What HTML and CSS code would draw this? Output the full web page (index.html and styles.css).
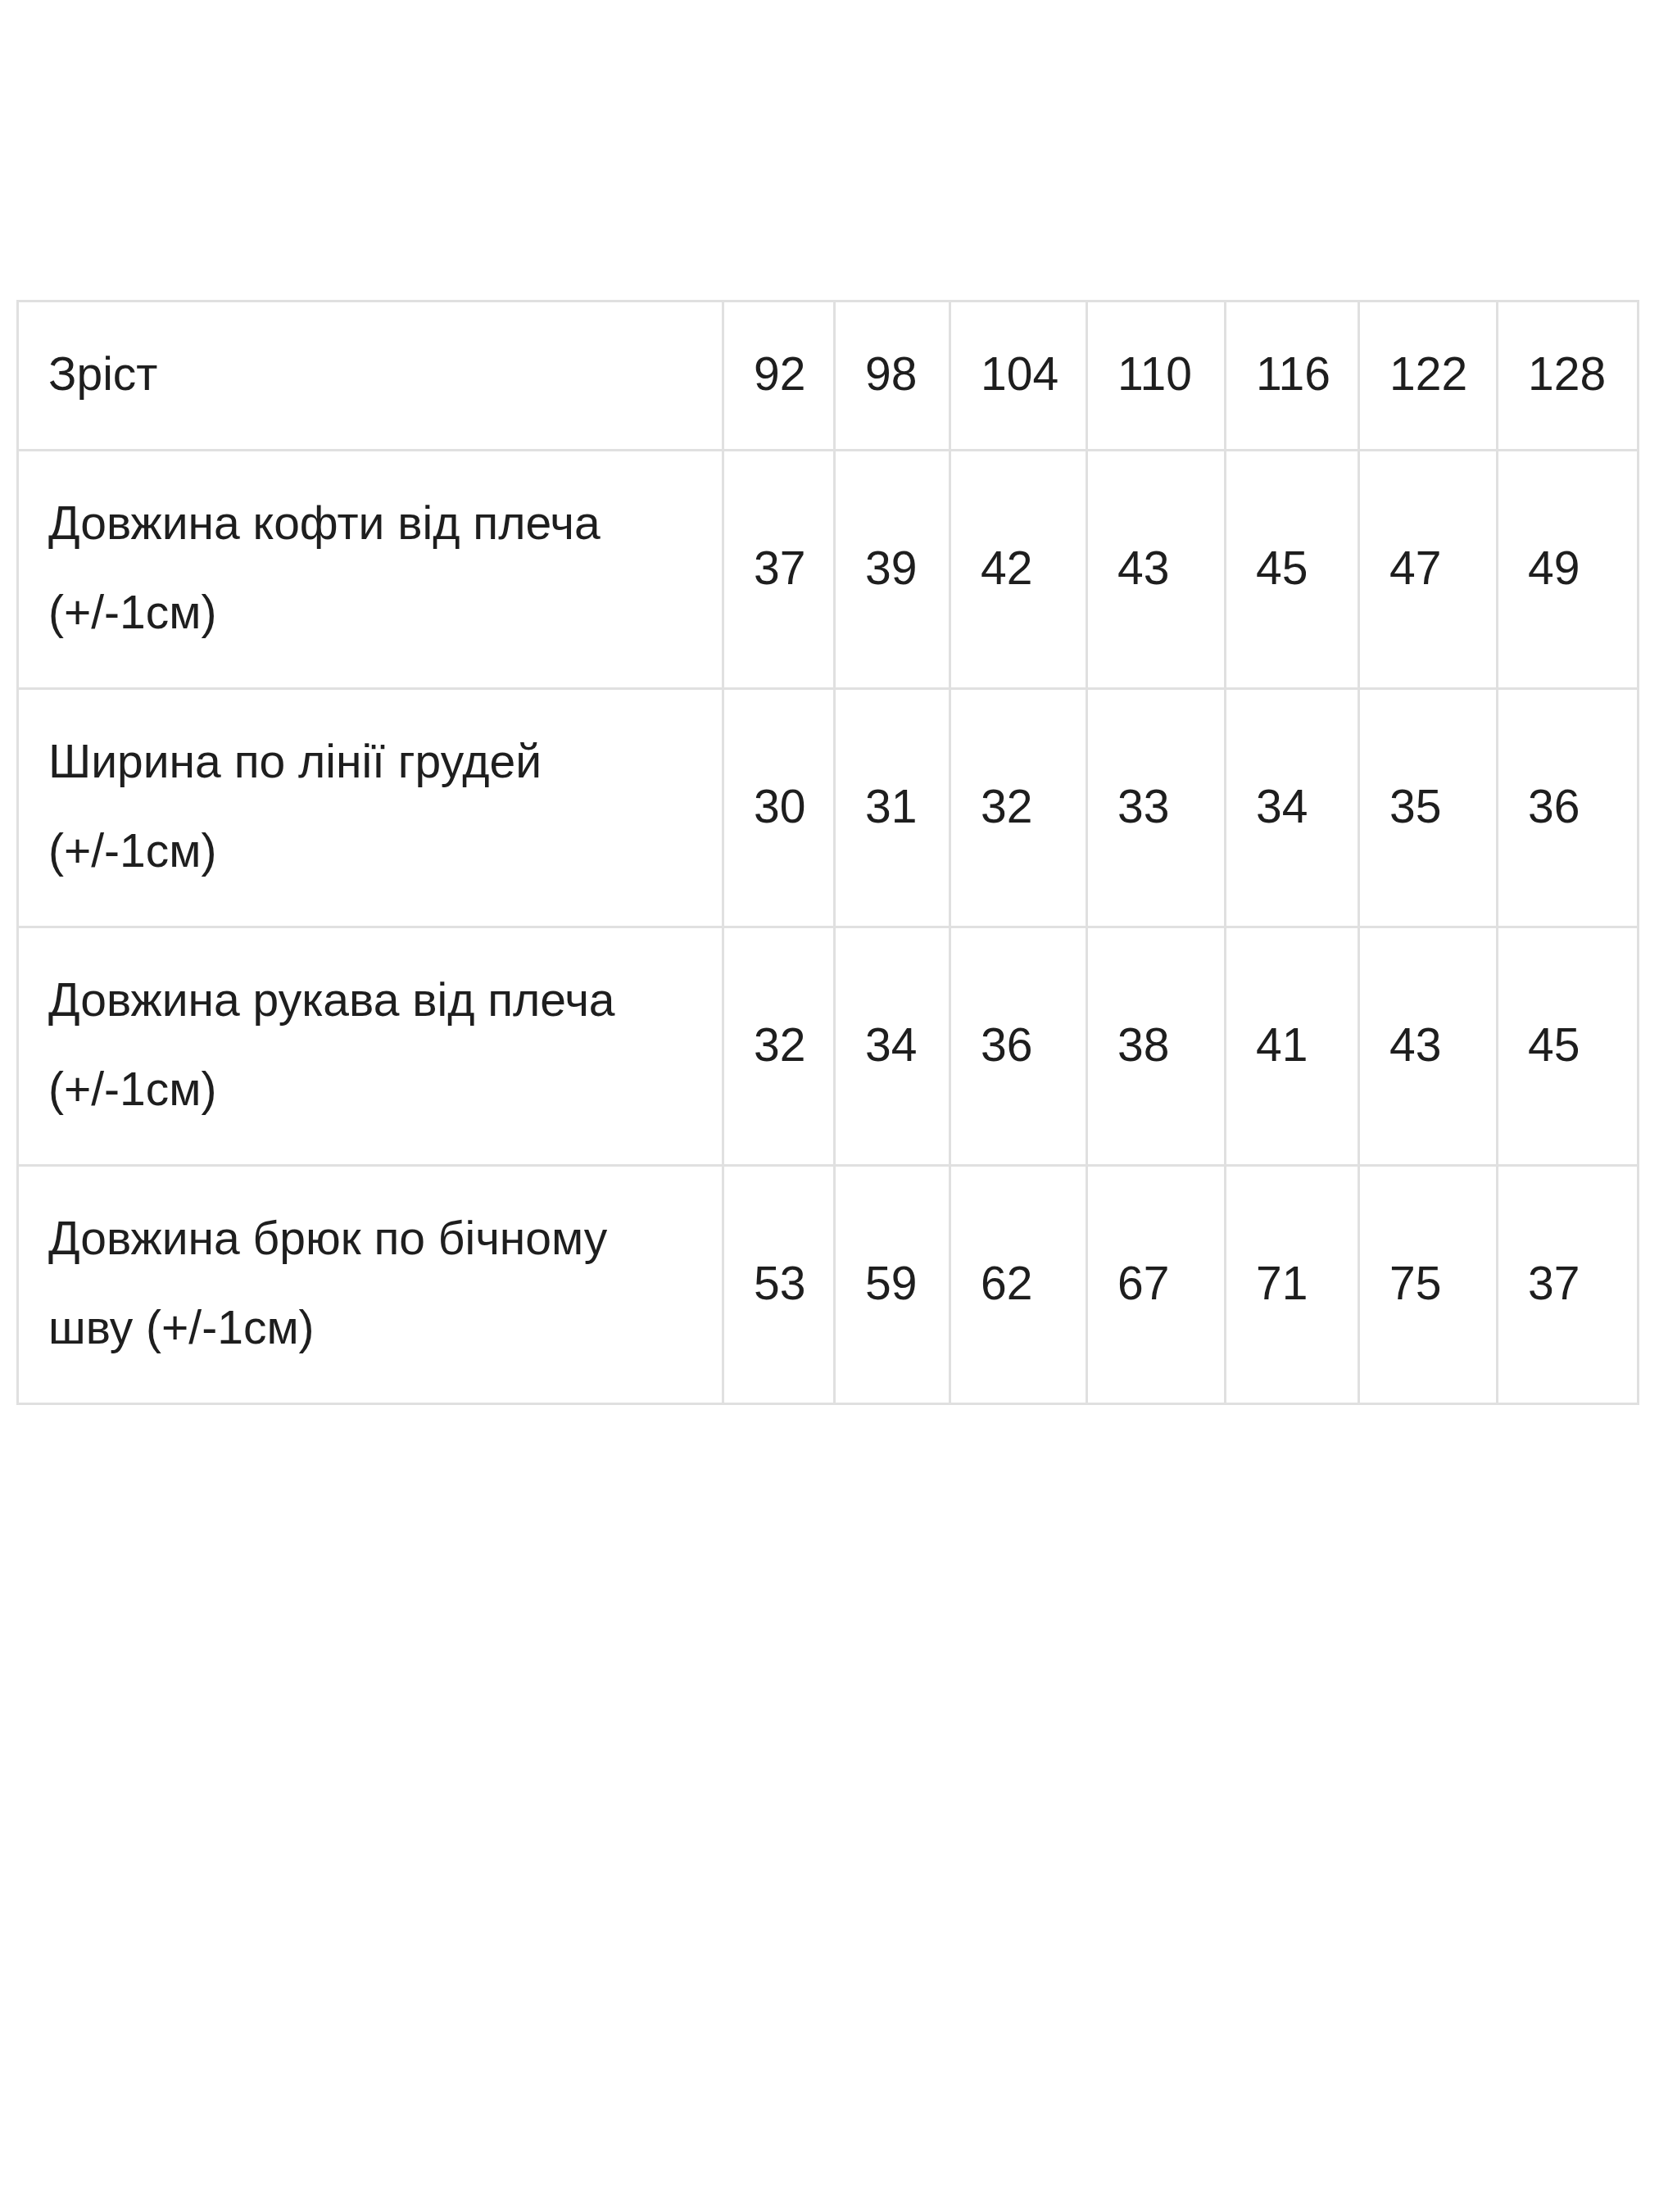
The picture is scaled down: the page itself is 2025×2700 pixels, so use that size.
FILE: index.html
```html
<!DOCTYPE html>
<html lang="uk">
<head>
<meta charset="utf-8">
<title>Таблиця розмірів</title>
<link rel="stylesheet" href="styles.css">
</head>
<body>
<table class="sizes">
  <colgroup>
    <col class="c0"><col class="c1"><col class="c2"><col class="c3"><col class="c4"><col class="c5"><col class="c6"><col class="c7">
  </colgroup>
  <tbody>
    <tr>
      <td class="label">Зріст</td><td>92</td><td>98</td><td>104</td><td>110</td><td>116</td><td>122</td><td>128</td>
    </tr>
    <tr>
      <td class="label">Довжина кофти від плеча (+/-1см)</td><td>37</td><td>39</td><td>42</td><td>43</td><td>45</td><td>47</td><td>49</td>
    </tr>
    <tr>
      <td class="label">Ширина по лінії грудей (+/-1см)</td><td>30</td><td>31</td><td>32</td><td>33</td><td>34</td><td>35</td><td>36</td>
    </tr>
    <tr>
      <td class="label">Довжина рукава від плеча (+/-1см)</td><td>32</td><td>34</td><td>36</td><td>38</td><td>41</td><td>43</td><td>45</td>
    </tr>
    <tr>
      <td class="label">Довжина брюк по бічному шву (+/-1см)</td><td>53</td><td>59</td><td>62</td><td>67</td><td>71</td><td>75</td><td>37</td>
    </tr>
  </tbody>
</table>
</body>
</html>
```

FILE: styles.css
```css
html, body {
  margin: 0;
  padding: 0;
  background: #ffffff;
}

body {
  font-family: "Liberation Sans", Arial, sans-serif;
  color: #1e1e1e;
}

.sizes {
  margin: 366px 0 0 20px;
  width: 1978px;
  table-layout: fixed;
  border-collapse: collapse;
  font-size: 57px;
  line-height: 109px;
}

.sizes td {
  border: 3px solid #e0e0e0;
  padding: 33px 6px 37px 36px;
  vertical-align: middle;
  text-align: left;
  white-space: nowrap;
}

.sizes td.label {
  padding-right: 36px;
  white-space: normal;
}

.c0 { width: 861px; }
.c1 { width: 136px; }
.c2 { width: 141px; }
.c3 { width: 167px; }
.c4 { width: 169px; }
.c5 { width: 163px; }
.c6 { width: 169px; }
.c7 { width: 172px; }
```
